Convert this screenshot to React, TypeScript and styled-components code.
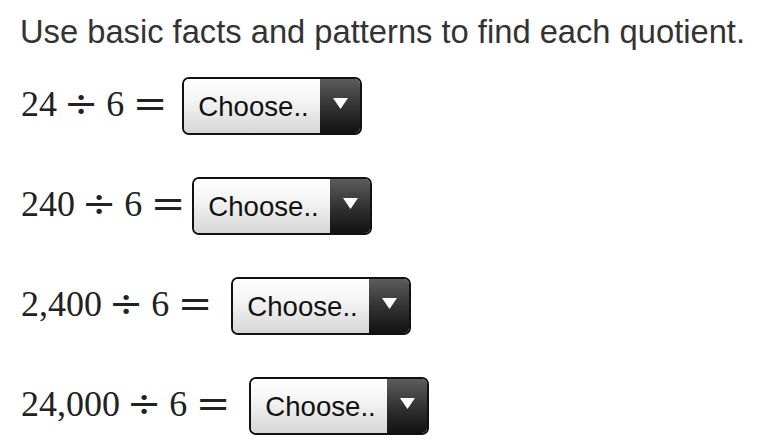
import React from "react";
import styled, { createGlobalStyle } from "styled-components";

const Global = createGlobalStyle`
  html, body { margin: 0; padding: 0; background: #fff; }
  body { font-family: "Liberation Sans", Arial, sans-serif; }
`;

const Page = styled.div`
  width: 773px;
  height: 448px;
  box-sizing: border-box;
  padding: 16px 0 0 20px;
  display: flex;
  flex-direction: column;
  gap: 28px;
  overflow: hidden;
`;

const Title = styled.p`
  margin: 0;
  font-family: "Liberation Sans", Arial, sans-serif;
  font-size: 32.7px;
  line-height: 1;
  color: #333;
`;

const Rows = styled.div`
  display: flex;
  flex-direction: column;
  gap: 42px;
  padding-left: 1px;
`;

const Row = styled.div`
  display: flex;
  align-items: baseline;
  height: 58px;
`;

const Expr = styled.span<{ $after: number }>`
  display: inline-flex;
  align-items: baseline;
  font-family: "Liberation Serif", "Times New Roman", serif;
  font-size: 36px;
  line-height: 1;
  color: #222;
  margin-right: ${(p) => p.$after}px;
`;

const Num = styled.span<{ $left?: number }>`
  margin-left: ${(p) => p.$left ?? 0}px;
`;

const Op = styled.span<{ $left: number }>`
  display: inline-block;
  font-family: "DejaVu Serif", serif;
  font-size: 36px;
  margin-left: ${(p) => p.$left}px;
  transform: scale(1.15, 1.1);
`;

const Select = styled.div`
  display: inline-flex;
  box-sizing: border-box;
  width: 180px;
  height: 58px;
  border: 2px solid #111;
  border-radius: 7px;
  overflow: hidden;
`;

const SelectLabel = styled.div`
  flex: 1;
  display: flex;
  align-items: center;
  padding-left: 14px;
  padding-top: 2px;
  background: linear-gradient(#ffffff 0%, #f4f4f4 40%, #d6d6d6 100%);
  font-family: "Liberation Sans", Arial, sans-serif;
  font-size: 27.6px;
  color: #111;
  white-space: nowrap;
  overflow: hidden;
`;

const SelectArrow = styled.div`
  width: 40px;
  display: flex;
  align-items: center;
  justify-content: center;
  padding-bottom: 5px;
  box-sizing: border-box;
  background: linear-gradient(#5c5c5c 0%, #333 50%, #121212 100%);
`;

const Arrow = () => (
  <svg width="15" height="11" viewBox="0 0 15 11">
    <polygon points="0,0 15,0 7.5,11" fill="#fff" />
  </svg>
);

type Item = { n: string; after: number };

const items: Item[] = [
  { n: "24", after: 17 },
  { n: "240", after: 9 },
  { n: "2,400", after: 21 },
  { n: "24,000", after: 21 },
];

export default function App() {
  return (
    <>
      <Global />
      <Page>
        <Title>Use basic facts and patterns to find each quotient.</Title>
        <Rows>
          {items.map((it) => (
            <Row key={it.n}>
              <Expr $after={it.after}>
                <Num>{it.n}</Num>
                <Op $left={9}>÷</Op>
                <Num $left={10}>6</Num>
                <Op $left={11}>=</Op>
              </Expr>
              <Select>
                <SelectLabel>Choose..</SelectLabel>
                <SelectArrow>
                  <Arrow />
                </SelectArrow>
              </Select>
            </Row>
          ))}
        </Rows>
      </Page>
    </>
  );
}
